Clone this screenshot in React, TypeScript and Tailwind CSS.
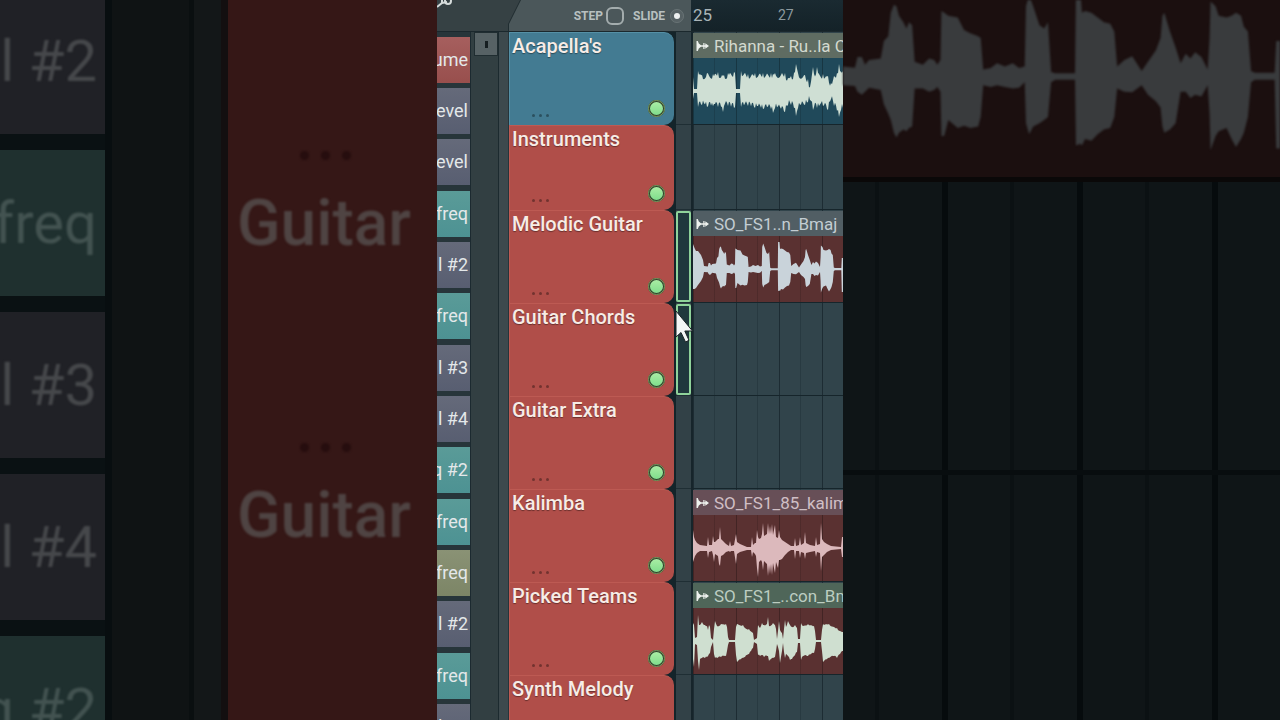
import clsx from 'clsx';

// [x, height above the centre line, height below it]
type Point = [number, number, number];

interface Clip {
  title: string;
  headerClass: string;
  bodyClass: string;
  waveClass: string;
  points: Point[];
  jitter: number;
}

interface Track {
  name: string;
  color: 'blue' | 'red';
  short?: boolean;
  selected?: boolean;
  clip?: Clip;
}

const VOCAL_WAVE: Point[] = [
  [0, 14, 8], [1, 2, 2], [4, 2, 2], [5, 20, 16], [9, 16, 14], [14, 18, 16], [20, 17, 15], [25, 19, 16], [29, 16, 16],
  [30, 15, 21], [31, 16, 15], [35, 18, 15], [41, 19, 17], [42, 18, 16], [43, 2, 2], [47, 2, 2], [48, 20, 16],
  [55, 17, 15], [62, 18, 17], [70, 18, 18], [78, 18, 18], [80, 17, 22], [82, 18, 17], [92, 18, 21], [95, 13, 14],
  [98, 15, 14], [101, 18, 17], [103, 27, 25], [105, 18, 17], [112, 16, 14], [115, 12, 11], [117, 4, 9],
  [120, 24, 19], [121, 17, 16], [124, 24, 17], [126, 17, 15], [130, 17, 15], [135, 15, 19], [138, 8, 8],
  [141, 15, 15], [144, 18, 20], [146, 27, 26], [148, 19, 19], [150, 20, 17],
];

const GUITAR_WAVE: Point[] = [
  [0, 25, 20], [1.5, 21, 20], [3, 18, 19], [5, 18, 16], [8, 14, 12], [10, 9, 8], [11, 3, 3], [14.8, 2.6, 3.2],
  [15.6, 6, 5], [17, 6, 6], [18, 3.5, 5], [19.3, 5, 3.8], [23, 5.5, 4.5], [24, 11, 9], [25.4, 12.5, 12],
  [26.2, 20, 14], [27.2, 22.5, 18], [28, 22, 19.5], [28.8, 19, 18], [30.2, 17, 17], [31.2, 15, 17.5], [32, 17, 16.5],
  [33, 16, 16], [33.8, 4.5, 4], [36.4, 3.5, 4], [38.4, 5.5, 5], [40, 5, 4.5], [41, 3.5, 3.5], [42, 5, 5],
  [42.3, 20.5, 19], [43.2, 20, 19], [44.5, 19, 14], [47.5, 18.5, 16.5], [49.5, 14.5, 15.8], [51.5, 13.5, 16.5],
  [54, 12.5, 16], [54.8, 12, 13], [55.6, 2, 3], [58, 2.5, 3.5], [60, 4, 3], [62.5, 3, 3.5], [65, 4, 4], [67, 2.5, 3.8],
  [68.8, 3, 2], [69.2, 22, 15], [70.2, 25.5, 18.5], [71.5, 22, 16], [73.5, 16, 15], [75, 15, 14], [76.2, 17, 13],
  [77.2, 1.2, 2], [78.5, 0.8, 1.2], [84.8, 0.8, 1.2], [85.1, 27, 22], [86.5, 27, 21.5], [87, 20, 22], [88, 20.5, 20],
  [90, 20, 20.5], [92, 18.5, 18.5], [94, 17, 17], [96, 16.5, 16.5], [97.3, 14, 13], [98.2, 3, 4], [100.5, 5, 5],
  [103, 6.2, 5.2], [106, 1.5, 3], [108, 4.5, 6], [110.5, 8, 8], [112, 12, 10], [112.6, 19, 16], [113.2, 20, 18],
  [115, 14, 17], [116.8, 9, 15], [118.4, 4, 5], [120, 7, 5], [121.5, 5.5, 7], [123, 7.5, 6], [125, 6, 6.5],
  [127, 2, 3], [127.6, 12, 12], [127.9, 23.5, 23.5], [129.5, 22, 19], [130.5, 19, 17.5], [133, 18.5, 16.5],
  [134.6, 19, 20], [136, 20, 22.5], [137.6, 19, 20], [138.5, 15.5, 18], [139.8, 14, 13], [140.8, 1.5, 2],
  [142, 1, 1.2], [148.3, 1, 1.2], [148.8, 11, 23], [150, 11, 23],
];

const KALIMBA_WAVE: Point[] = [
  [0, 18, 14], [1, 11, 11], [2, 8, 8], [4, 5, 5], [7, 3, 3], [14, 2, 3], [15, 11, 10], [16, 3, 4], [19, 3, 3],
  [20, 12, 7], [21, 6, 14], [22, 6, 6], [25, 9, 8], [26, 9, 16], [27, 21, 18], [28, 9, 8], [30, 7, 7], [33, 4, 4],
  [36, 2, 3], [37, 7, 4], [38, 2, 3], [41, 3, 3], [43, 14, 16], [44, 6, 6], [47, 4, 4], [54, 1, 2], [58, 1, 2],
  [59, 11, 9], [60, 3, 4], [62, 5, 6], [63, 5, 8], [64, 18, 20], [65, 11, 29], [66, 9, 14], [68, 10, 12], [69, 14, 14],
  [70, 25, 22], [71, 12, 13], [74, 14, 16], [75, 25, 28], [76, 14, 17], [77, 22, 26], [78, 14, 16], [79, 24, 27],
  [80, 13, 15], [82, 23, 25], [83, 11, 14], [85, 10, 20], [86, 18, 12], [87, 11, 12], [89, 8, 11], [92, 6, 7],
  [95, 4, 4], [98, 2, 2], [101, 2, 2], [102, 10, 11], [103, 2, 3], [106, 3, 3], [107, 11, 10], [108, 3, 4],
  [111, 5, 5], [112, 16, 11], [113, 5, 5], [117, 3, 4], [122, 2, 3], [123, 11, 9], [124, 3, 4], [127, 4, 5],
  [128, 25, 23], [129, 9, 9], [131, 6, 7], [134, 4, 4], [138, 2, 2], [148, 1, 1], [149, 11, 9], [150, 11, 9],
];

const TEAMS_WAVE: Point[] = [
  [0, 18, 18], [1, 16, 26], [2, 3, 3], [4, 4, 4], [5, 26, 20], [6, 16, 29], [7, 16, 18], [9, 19, 17], [12, 16, 17],
  [14, 15, 16], [15, 11, 15], [16, 16, 13], [17, 14, 12], [18, 3, 6], [20, 1, 1], [21, 12, 13], [22, 20, 17],
  [24, 15, 17], [28, 17, 16], [33, 17, 15], [34, 14, 10], [35, 4, 4], [36, 1, 1], [42, 1, 1], [43, 14, 14],
  [44, 17, 21], [50, 16, 17], [52, 13, 16], [56, 12, 13], [60, 8, 7], [61, 1, 1], [64, 3, 3], [65, 16, 14],
  [67, 13, 15], [69, 18, 14], [71, 16, 16], [74, 17, 15], [75, 24, 15], [76, 15, 20], [80, 18, 17], [82, 16, 16],
  [83, 12, 10], [84, 2, 3], [86, 20, 10], [87, 11, 22], [89, 8, 10], [90, 2, 2], [91, 12, 11], [92, 21, 17],
  [93, 14, 13], [95, 20, 15], [97, 16, 19], [99, 14, 18], [102, 16, 14], [104, 13, 11], [105, 2, 2], [107, 2, 2],
  [108, 18, 19], [110, 15, 15], [115, 17, 15], [121, 15, 12], [122, 10, 8], [123, 1, 1], [128, 1, 1], [129, 11, 10],
  [130, 17, 21], [136, 17, 17], [141, 14, 15], [144, 13, 17], [147, 10, 13], [150, 9, 10],
];

const TRACKS: Track[] = [
  {
    name: "Acapella's",
    color: 'blue',
    clip: {
      title: 'Rihanna - Ru..la C',
      headerClass: 'bg-[#5f6c62] text-[#d3d9cf]',
      bodyClass: 'bg-[#20495a]',
      waveClass: 'fill-[#cfdfd4]',
      points: VOCAL_WAVE,
      jitter: 5,
    },
  },
  { name: 'Instruments', color: 'red', short: true },
  {
    name: 'Melodic Guitar',
    color: 'red',
    selected: true,
    clip: {
      title: 'SO_FS1..n_Bmaj',
      headerClass: 'bg-[#515e64] text-[#c3cdd3]',
      bodyClass: 'bg-[#5a3131]',
      waveClass: 'fill-[#c9d3da]',
      points: GUITAR_WAVE,
      jitter: 0,
    },
  },
  { name: 'Guitar Chords', color: 'red', selected: true },
  { name: 'Guitar Extra', color: 'red' },
  {
    name: 'Kalimba',
    color: 'red',
    clip: {
      title: 'SO_FS1_85_kalim',
      headerClass: 'bg-[#674f57] text-[#d0bfc5]',
      bodyClass: 'bg-[#5a3131]',
      waveClass: 'fill-[#dcb9bc]',
      points: KALIMBA_WAVE,
      jitter: 0,
    },
  },
  {
    name: 'Picked Teams',
    color: 'red',
    clip: {
      title: 'SO_FS1_..con_Bm',
      headerClass: 'bg-[#4f6659] text-[#bccdc1]',
      bodyClass: 'bg-[#5a3131]',
      waveClass: 'fill-[#cfdfd0]',
      points: TEAMS_WAVE,
      jitter: 1,
    },
  },
  { name: 'Synth Melody', color: 'red' },
];

const BROWSER_COLORS = {
  red: 'bg-linear-to-b from-[#a65f5e] to-[#984f4d]',
  slate: 'bg-linear-to-b from-[#656a7a] to-[#585e71]',
  teal: 'bg-linear-to-b from-[#5a9b98] to-[#4d9293]',
  olive: 'bg-linear-to-b from-[#8a9275] to-[#7c8566]',
};

const BROWSER_ITEMS: { label: string; color: keyof typeof BROWSER_COLORS }[] = [
  { label: 'ume', color: 'red' },
  { label: 'evel', color: 'slate' },
  { label: 'evel', color: 'slate' },
  { label: 'freq', color: 'teal' },
  { label: 'l #2', color: 'slate' },
  { label: 'freq', color: 'teal' },
  { label: 'l #3', color: 'slate' },
  { label: 'l #4', color: 'slate' },
  { label: 'q #2', color: 'teal' },
  { label: 'freq', color: 'teal' },
  { label: 'freq', color: 'olive' },
  { label: 'l #2', color: 'slate' },
  { label: 'freq', color: 'teal' },
  { label: 'l #3', color: 'slate' },
];

const GRID =
  'bg-[repeating-linear-gradient(90deg,#1d2c33_0_1px,#31444b_1px_21px,#283a41_21px_22px,#31444b_22px_43px)]';
const GRID_OVERLAY =
  'bg-[repeating-linear-gradient(90deg,#0004_0_1px,transparent_1px_21px,#0002_21px_22px,transparent_22px_43px)]';

function wavePath(points: Point[], center: number, jitter: number) {
  const top: string[] = [];
  const bottom: string[] = [];
  points.forEach(([x, up, down], i) => {
    top.push(`${x} ${center - up}`);
    bottom.unshift(`${x} ${center + down}`);
    const next = points[i + 1];
    if (!next || !jitter) return;
    // roughen the line between two peaks
    for (let px = x + 1; px < next[0]; px++) {
      const t = (px - x) / (next[0] - x);
      const u = up + (next[1] - up) * t;
      const d = down + (next[2] - down) * t;
      const noise = Math.abs(Math.sin(px * 12.9898)) * jitter;
      const noise2 = Math.abs(Math.cos(px * 7.233)) * jitter;
      top.push(`${px} ${center - Math.max(1, u > 6 ? u - noise : u)}`);
      bottom.unshift(`${px} ${center + Math.max(1, d > 6 ? d - noise2 : d)}`);
    }
  });
  return `M${top.join('L')}L${bottom.join('L')}Z`;
}

function ClipIcon() {
  return (
    <svg viewBox="0 0 13 12" className="h-3 w-[13px] shrink-0 fill-[#eef2ee]">
      <path d="M0.500 1h1.300l1 2.600L5 5.200h2.300V3h1.200v2.200h.8V3.200L13 6l-3.700 2.800V6.800h-.8V9H7.300V6.800H5L2.800 8.400l-1 2.600H.5z" />
    </svg>
  );
}

function AudioClip({ clip }: { clip: Clip }) {
  return (
    <div className="flex h-full flex-col overflow-hidden">
      <div className={clsx('flex h-[25px] shrink-0 items-center gap-[5px] pl-[3px]', clip.headerClass)}>
        <ClipIcon />
        <span className="whitespace-nowrap text-[17px] leading-[22px]">{clip.title}</span>
      </div>
      <div className={clsx('min-h-0 flex-1', clip.bodyClass)}>
        <div className={clsx('h-full', GRID_OVERLAY)}>
          <svg viewBox="0 0 150 66" preserveAspectRatio="none" className={clsx('h-full w-full', clip.waveClass)}>
            <path d={wavePath(clip.points, 33, clip.jitter)} />
          </svg>
        </div>
      </div>
    </div>
  );
}

function Dots({ large = false }: { large?: boolean }) {
  return (
    <span className={clsx('flex', large ? 'gap-3' : 'gap-1')}>
      {[0, 1, 2].map((i) => (
        <span
          key={i}
          className={clsx('rounded-full', large ? 'size-[9px] bg-[#260d0e]' : 'size-[3px] bg-black/35')}
        />
      ))}
    </span>
  );
}

function TrackRow({ track }: { track: Track }) {
  return (
    <div className={clsx('flex shrink-0', track.short ? 'h-[85px]' : 'h-[93px]')}>
      <div className="w-[167px] bg-[#14242a] pr-[2px]">
        <div
          className={clsx(
            'flex h-full flex-col justify-between rounded-r-[10px] border-t border-l pl-[2px]',
            track.color === 'blue' ? 'border-[#5590a6] bg-[#437b92]' : 'border-[#bd5a53] bg-[#b04e49]'
          )}
        >
          <h3 className="whitespace-nowrap text-[20px] leading-[26px] font-medium text-[#f7ece6] text-shadow-[0_1px_1px_#0006]">
            {track.name}
          </h3>
          <div className="flex items-end justify-between pr-[9px] pb-2 pl-[20px]">
            <button aria-label={`${track.name} options`}>
              <Dots />
            </button>
            <input
              type="checkbox"
              defaultChecked
              aria-label={`${track.name} enabled`}
              className="size-[17px] appearance-none rounded-full border-2 border-[#31432f] bg-[#55695a] outline -outline-offset-1 outline-[#7a9a5c] checked:bg-linear-to-b checked:from-[#a9eda4] checked:to-[#7fdd8c]"
            />
          </div>
        </div>
      </div>

      {/* group / selection strip */}
      <div className="w-[15px] border-b border-[#1f2e34] bg-[#324147] pt-px">
        {track.selected && <div className="h-full rounded-[2px] border-2 border-[#8fd39a] bg-[#20383d]" />}
      </div>

      <div className={clsx('min-w-0 flex-1 border-b border-l-2 border-[#16252b] pt-px', GRID)}>
        {track.clip && <AudioClip clip={track.clip} />}
      </div>
    </div>
  );
}

function Header() {
  return (
    <header className="flex h-8 shrink-0 border-b border-[#1b282d] bg-[#364144]">
      <div className="w-[71px]">
        <svg viewBox="0 0 20 12" className="h-3 w-5 fill-none stroke-[#d5dbdb] stroke-2">
          <path d="M0 7l5-4 5-1M5 3V0" />
          <circle cx="11" cy="1" r="3" />
        </svg>
      </div>
      <div className="w-[183px] bg-[#202d31] pl-px [clip-path:polygon(12px_0,100%_0,100%_100%,0_100%,0_24px)]">
        <div className="flex h-full items-center justify-end gap-[9px] bg-[#4b575a] pr-[7px] text-[12px] font-bold text-[#b8c0c0] [clip-path:polygon(12px_0,100%_0,100%_100%,0_100%,0_24px)]">
          <label className="flex items-center gap-[3px]">
            STEP
            <input type="checkbox" className="size-[18px] appearance-none rounded-[6px] border-2 border-[#a3acad]" />
          </label>
          <label className="flex items-center gap-[5px]">
            SLIDE
            <input
              type="radio"
              defaultChecked
              className="size-[14px] appearance-none rounded-full border-4 border-[#566164] bg-[#eef1f1] outline -outline-offset-1 outline-[#677274]"
            />
          </label>
        </div>
      </div>
      <div className="flex flex-1 items-center bg-linear-to-b from-[#1a2a31] to-[#142228] pl-[2px] text-[#a9b4b8]">
        <span className="w-[85px] text-[17px]">25</span>
        <span className="text-[14px] text-[#8d999e]">27</span>
      </div>
    </header>
  );
}

function Browser() {
  return (
    <nav className="flex w-[34px] shrink-0 flex-col gap-[5px] border-r border-[#1c2a30] bg-[#27353a] pt-[5px]">
      {BROWSER_ITEMS.map((item, i) => (
        <button
          key={i}
          className={clsx(
            'flex h-[46px] shrink-0 items-center justify-end overflow-hidden pr-[2px] pb-[2px] text-[18px] whitespace-nowrap text-[#e4e8ea] nth-[3n]:mb-px',
            BROWSER_COLORS[item.color]
          )}
        >
          {item.label}
        </button>
      ))}
    </nav>
  );
}

function Playlist() {
  return (
    <main className="relative flex w-[406px] shrink-0 flex-col overflow-hidden bg-[#364347]">
      <Header />
      <div className="flex min-h-0 flex-1">
        <Browser />
        <div className="w-[28px] shrink-0 border-r border-[#1c2a2f] bg-[#323f42] pl-[3px]">
          <button
            aria-label="Scroll"
            className="flex size-6 items-center justify-center border border-[#202d31] bg-[#576265]"
          >
            <span className="h-[7px] w-[3px] bg-[#161e21]" />
          </button>
        </div>
        <div className="w-[10px] shrink-0 border-r border-[#26343a] bg-[#3d494d]" />
        <section className="min-w-0 flex-1">
          {TRACKS.map((track) => (
            <TrackRow key={track.name} track={track} />
          ))}
        </section>
      </div>

      {/* mouse pointer */}
      <svg viewBox="0 0 18 34" className="absolute top-[310px] left-[238px] h-[34px] w-[18px]">
        <path
          d="M1 1v26l5-4.500 4.500 9.500 3.500-1.700-4.200-9.300H17.500z"
          className="fill-[#f4f6f6] stroke-[#1c2427]"
          strokeWidth="1"
        />
      </svg>
    </main>
  );
}

/* Dimmed close-up of the same playlist that fills the space on both sides */
function BackdropLeft() {
  const tiles = [
    { label: 'l #2', tone: 'bg-[#202126] text-[#46484b]' },
    { label: 'freq', tone: 'bg-[#1f302f] text-[#435351]' },
    { label: 'l #3', tone: 'bg-[#202126] text-[#46484b]' },
    { label: 'l #4', tone: 'bg-[#202126] text-[#46484b]' },
    { label: 'q #2', tone: 'bg-[#1f302f] text-[#435351]' },
  ];
  return (
    <div aria-hidden="true" className="flex min-w-0 flex-1 overflow-hidden bg-[#0f1314]">
      <div className="flex w-[112px] shrink-0 flex-col gap-4 border-r-[7px] border-[#080e10] bg-[#0a1113]">
        {tiles.map((tile) => (
          <div
            key={tile.label + tile.tone}
            className={clsx(
              'flex h-[146px] shrink-0 items-center justify-end overflow-hidden pr-2 text-[58px] whitespace-nowrap first:-mt-3',
              tile.tone
            )}
          >
            <span className="blur-[1px]">{tile.label}</span>
          </div>
        ))}
      </div>
      <div className="w-[82px] shrink-0 border-r-[5px] border-[#0a0f10]" />
      <div className="w-[34px] shrink-0 border-r-[7px] border-[#130f10] bg-[#131718]" />
      <div className="flex min-w-0 flex-1 flex-col bg-[#351716] pt-[151px] pl-[9px]">
        {[0, 1].map((i) => (
          <div key={i} className="h-[292px] shrink-0 blur-[1px]">
            <div className="pl-[63px]">
              <Dots large />
            </div>
            <p className="pt-[24px] text-[64px] leading-[80px] font-medium text-[#4f4443]">Guitar</p>
          </div>
        ))}
      </div>
    </div>
  );
}

function BackdropRight() {
  return (
    <div
      aria-hidden="true"
      className="flex min-w-0 flex-1 flex-col bg-[repeating-linear-gradient(90deg,#0f1517_0_32px,#0b1113_32px_36px,#0f1517_36px_99px,#060b0d_99px_105px,#0f1517_105px_135px)]"
    >
      <div className="h-[182px] shrink-0 border-b-[5px] border-[#0a0808] bg-[#1b0f0f]">
        <svg
          viewBox="11 8 139 56"
          preserveAspectRatio="none"
          className="h-full w-full fill-[#393b3d] blur-[1px]"
        >
          <path d={wavePath(GUITAR_WAVE, 32, 0)} />
        </svg>
      </div>
      <div className="h-[293px] shrink-0 border-b-[5px] border-[#080d0f]" />
    </div>
  );
}

export default function App() {
  return (
    <div className="flex h-screen overflow-hidden bg-[#0f1517] font-[Roboto,'Liberation_Sans',sans-serif]">
      <BackdropLeft />
      <Playlist />
      <BackdropRight />
    </div>
  );
}
